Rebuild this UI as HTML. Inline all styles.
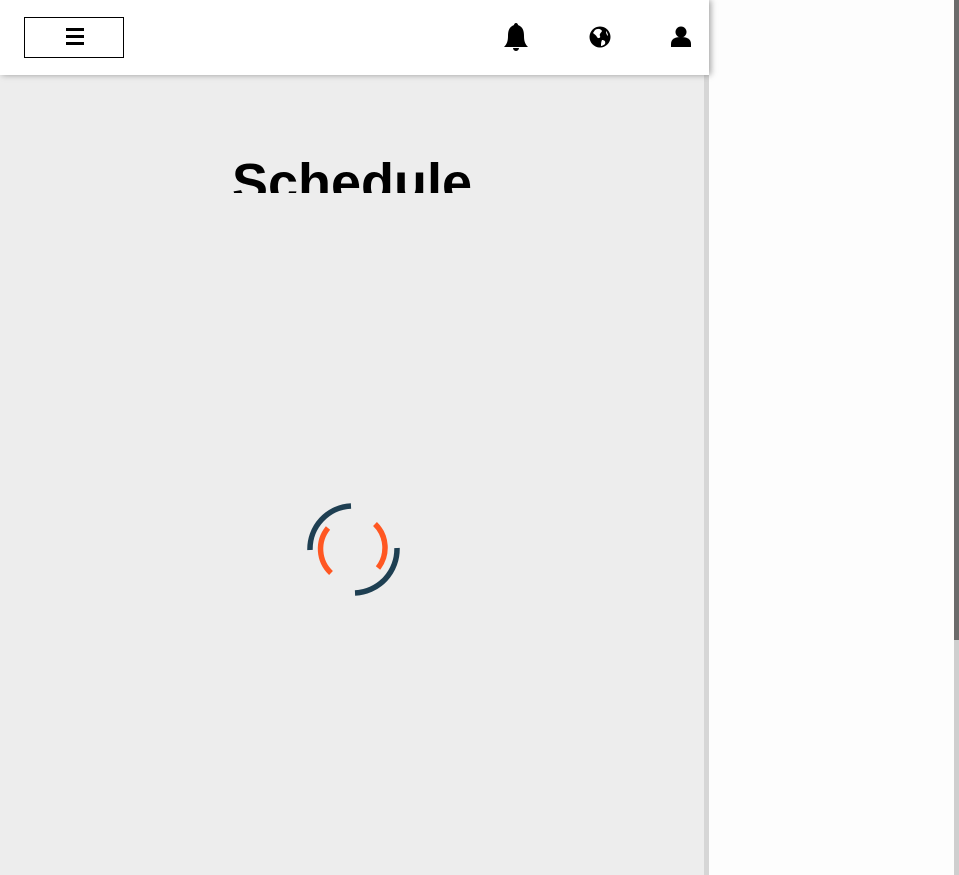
<!DOCTYPE html>
<html><head><style>
html,body{margin:0;padding:0;width:959px;height:875px;overflow:hidden;background:#fdfdfd;font-family:"Liberation Sans",sans-serif}
.hdr{position:absolute;left:0;top:0;width:709px;height:75px;background:#fff;box-shadow:2px 0 6px rgba(0,0,0,.35);z-index:2}
.menu{position:absolute;left:24px;top:17px;width:98px;height:39px;border:1px solid #000}
.menu i{position:absolute;left:41px;width:18px;height:3px;background:#000}
.main{position:absolute;left:0;top:75px;width:704px;height:800px;background:#ededed}
.strip{position:absolute;left:704px;top:75px;width:5px;height:800px;background:#d6d6d6}
.sb{position:absolute;left:954px;top:0;width:5px;height:875px;background:#cfcfcf}
.sb div{width:5px;height:640px;background:#6b6b6b}
.title{position:absolute;left:0;width:704px;top:73px;height:45px;overflow:hidden;text-align:center;font-weight:bold;font-size:54px;line-height:70px;color:#000;letter-spacing:0}
</style></head><body>
<div class="hdr">
 <div class="menu"><i style="top:10px"></i><i style="top:17px"></i><i style="top:24px"></i></div>
 <svg style="position:absolute;left:0;top:0" width="709" height="75">
  <path d="M516,23 c-1,0 -2,1 -2,2 c-5,2 -6,6 -6,11 c0,5 -1,8 -4,11 h24 c-3,-3 -4,-6 -4,-11 c0,-5 -1,-9 -6,-11 c0,-1 -1,-2 -2,-2z M513,48 a3,3 0 0 0 6,0z" fill="#000"/>
  <circle cx="600" cy="37" r="10.5" fill="#000"/>
  <path d="M595,30 c3,-2 6,-1 7,1 c-1,2 -3,3 -2,5 c1,2 -2,3 -3,1 c-1,-2 -3,-3 -4,-4z M602,40 c2,0 4,1 3,4 c-1,1 -3,2 -4,2 c0,-2 0,-4 1,-6z M606,31 c1,1 2,3 2,5 c-1,-1 -2,-2 -2,-5z" fill="#fff"/>
  <circle cx="681" cy="32" r="5.5" fill="#000"/>
  <path d="M671,47 v-3 c0,-5 4,-7 10,-7 c6,0 10,2 10,7 v3z" fill="#000"/>
 </svg>
</div>
<div class="main"><div class="title">Schedule</div>
</div>
<div class="strip"></div>
<svg style="position:absolute;left:0;top:0" width="709" height="875">
 <g fill="none" stroke-width="5.5">
  <path d="M310,550 A43,43 0 0 1 351,506" stroke="#1e3f52"/>
  <path d="M397,548 A44,44 0 0 1 355,593" stroke="#1e3f52"/>
  <path d="M328,528 A33,33 0 0 0 331,573" stroke="#ff5722"/>
  <path d="M375,524 A33,33 0 0 1 378,568" stroke="#ff5722"/>
 </g>
</svg>
<div class="sb"><div></div></div>
</body></html>
